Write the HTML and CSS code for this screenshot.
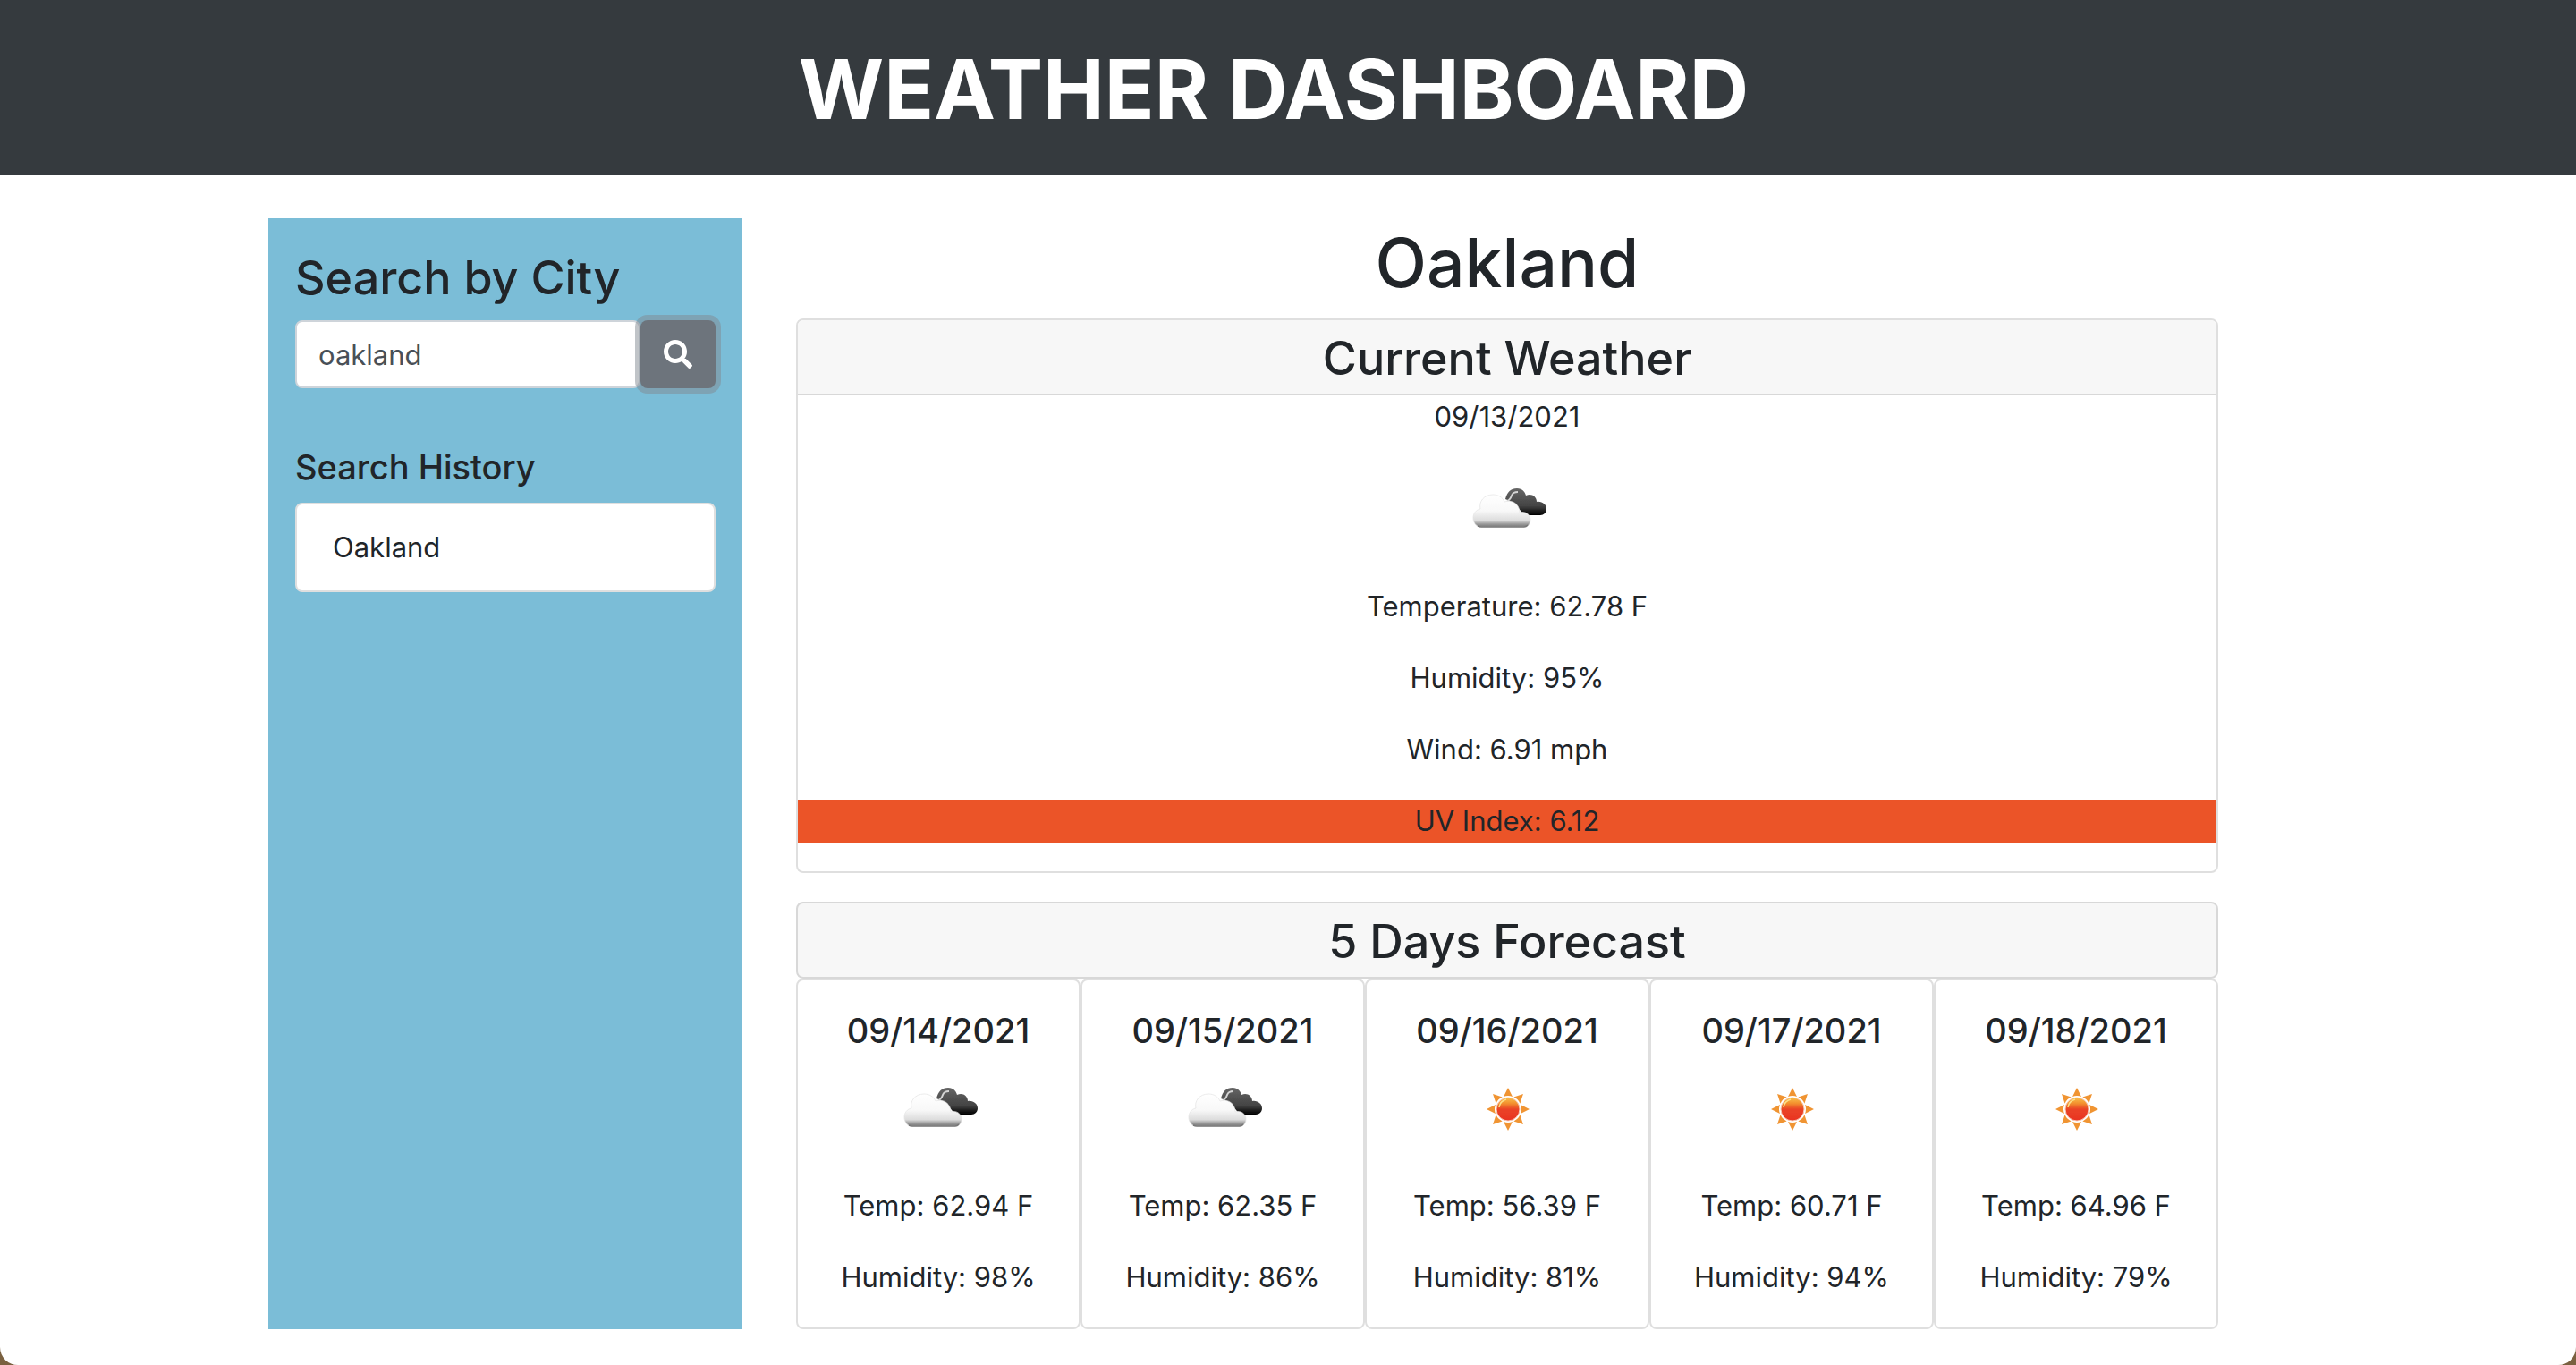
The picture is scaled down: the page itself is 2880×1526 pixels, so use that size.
FILE: index.html
```html
<!DOCTYPE html>
<html lang="en">
<head>
<meta charset="utf-8">
<title>Weather Dashboard</title>
<link rel="stylesheet" href="styles.css">
</head>
<body>
<svg class="sprite" aria-hidden="true">
  <defs>
    <linearGradient id="cloud-light" x1="0" y1="0" x2="0" y2="1">
      <stop offset="0" stop-color="#ffffff"/>
      <stop offset=".5" stop-color="#f8f8f8"/>
      <stop offset=".8" stop-color="#dcdcdc"/>
      <stop offset=".9" stop-color="#a0a0a0"/>
      <stop offset="1" stop-color="#777777"/>
    </linearGradient>
    <linearGradient id="cloud-dark" x1="0" y1="0" x2="0" y2="1">
      <stop offset="0" stop-color="#666666"/>
      <stop offset=".65" stop-color="#444444"/>
      <stop offset="1" stop-color="#000000"/>
    </linearGradient>
    <linearGradient id="sun-disc" x1="0" y1="0" x2="0" y2="1">
      <stop offset="0" stop-color="#f9c04a"/>
      <stop offset=".25" stop-color="#f3902f"/>
      <stop offset=".5" stop-color="#ea4326"/>
      <stop offset="1" stop-color="#e93323"/>
    </linearGradient>
    <filter id="soft" x="-20%" y="-20%" width="140%" height="140%"><feGaussianBlur stdDeviation=".7"/></filter>
    <symbol id="icon-clouds" viewBox="0 0 100 100">
      <g filter="url(#soft)">
        <path d="M48 36C50 28 54 24 61 24c6 0 9 4 10 8 6-3 12 1 12 7 6-1 11 3 11 8 0 4-3 7-7 7H70C64 49 60 40 48 36z" fill="url(#cloud-dark)"/>
        <path d="M50 38c3-1 4-3 5-6 1-3 4-4 7-4" fill="none" stroke="#d5d5d5" stroke-width="2"/>
        <path d="M19 67c-4-1-7-5-7-10 0-5 3-9 8-10-2-8 4-16 14-16 6 0 11 3 13 8 9-3 17 3 17 12 6-2 12 2 12 8 0 4-2 7-5 8z" fill="url(#cloud-light)" stroke="#e2e2e2" stroke-width=".7"/>
        <path d="M17 66q2 1 4 1h48q2 0 4-2" fill="none" stroke="#777777" stroke-width="1.5"/>
      </g>
    </symbol>
    <symbol id="icon-sun" viewBox="0 0 100 100">
      <g filter="url(#soft)">
        <g fill="#f09433">
          <path id="ray" d="M51 24l5 10q-5-2-10 0z"/>
          <use href="#ray" transform="rotate(45 51 48)"/>
          <use href="#ray" transform="rotate(90 51 48)"/>
          <use href="#ray" transform="rotate(135 51 48)"/>
          <use href="#ray" transform="rotate(180 51 48)"/>
          <use href="#ray" transform="rotate(225 51 48)"/>
          <use href="#ray" transform="rotate(270 51 48)"/>
          <use href="#ray" transform="rotate(315 51 48)"/>
        </g>
        <circle cx="51" cy="48" r="13" fill="url(#sun-disc)" stroke="#f7c9b4" stroke-width="1"/>
        <path d="M41 46q1-7 8-9" fill="none" stroke="#fbe08a" stroke-width="1.5"/>
      </g>
    </symbol>
  </defs>
</svg>

<header class="banner"><h1 class="banner-title">WEATHER DASHBOARD</h1></header>

<div class="container">
  <aside class="sidebar">
    <form class="search" onsubmit="return false">
      <label class="search-label" for="city">Search by City</label>
      <div class="search-group">
        <input class="search-input" id="city" type="text" value="oakland">
        <button class="search-button" type="submit" aria-label="Search">
          <svg class="search-icon" viewBox="0 0 512 512" aria-hidden="true"><path fill="currentColor" d="M505 442.700L405.300 343c-4.500-4.500-10.600-7-17-7H372c27.600-35.300 44-79.700 44-128C416 93.100 322.900 0 208 0S0 93.100 0 208s93.100 208 208 208c48.300 0 92.700-16.400 128-44v16.300c0 6.400 2.500 12.500 7 17l99.700 99.700c9.400 9.400 24.600 9.400 33.900 0l28.300-28.300c9.400-9.400 9.400-24.600.1-34zM208 336c-70.700 0-128-57.200-128-128 0-70.700 57.200-128 128-128 70.700 0 128 57.200 128 128 0 70.700-57.200 128-128 128z"/></svg>
        </button>
      </div>
    </form>
    <h2 class="history-title">Search History</h2>
    <ul class="history">
      <li class="history-item">Oakland</li>
    </ul>
  </aside>

  <main class="content">
    <h2 class="city">Oakland</h2>
    <section class="card current">
      <h3 class="card-header">Current Weather</h3>
      <p class="line">09/13/2021</p>
      <svg class="weather-icon" role="img" aria-label="Broken clouds"><use href="#icon-clouds"/></svg>
      <p class="line">Temperature: 62.78 F</p>
      <p class="line">Humidity: 95%</p>
      <p class="line">Wind: 6.91 mph</p>
      <p class="line uv-high">UV Index: 6.12</p>
    </section>

    <section class="forecast">
      <h3 class="card card-header forecast-title">5 Days Forecast</h3>
      <div class="days">
        <article class="card day">
          <h4 class="day-date">09/14/2021</h4>
          <svg class="weather-icon" role="img" aria-label="Broken clouds"><use href="#icon-clouds"/></svg>
          <p class="line">Temp: 62.94 F</p>
          <p class="line">Humidity: 98%</p>
        </article>
        <article class="card day">
          <h4 class="day-date">09/15/2021</h4>
          <svg class="weather-icon" role="img" aria-label="Broken clouds"><use href="#icon-clouds"/></svg>
          <p class="line">Temp: 62.35 F</p>
          <p class="line">Humidity: 86%</p>
        </article>
        <article class="card day">
          <h4 class="day-date">09/16/2021</h4>
          <svg class="weather-icon" role="img" aria-label="Clear sky"><use href="#icon-sun"/></svg>
          <p class="line">Temp: 56.39 F</p>
          <p class="line">Humidity: 81%</p>
        </article>
        <article class="card day">
          <h4 class="day-date">09/17/2021</h4>
          <svg class="weather-icon" role="img" aria-label="Clear sky"><use href="#icon-sun"/></svg>
          <p class="line">Temp: 60.71 F</p>
          <p class="line">Humidity: 94%</p>
        </article>
        <article class="card day">
          <h4 class="day-date">09/18/2021</h4>
          <svg class="weather-icon" role="img" aria-label="Clear sky"><use href="#icon-sun"/></svg>
          <p class="line">Temp: 64.96 F</p>
          <p class="line">Humidity: 79%</p>
        </article>
      </div>
    </section>
  </main>
</div>
</body>
</html>
```
FILE: styles.css
```css
*, *::before, *::after { box-sizing: border-box; }

html { background: #7a6140; }

body {
  margin: 0;
  min-height: 100vh;
  background: #ffffff;
  border-radius: 0 0 20px 20px;
  color: #212529;
  font-family: Inter, "Liberation Sans", sans-serif;
  font-size: 31px;
  line-height: 48px;
}

h1, h2, h3, h4, p, ul { margin: 0; padding: 0; }

h2, h3, h4 { font-weight: 550; }

.sprite { position: absolute; width: 0; height: 0; }

.banner {
  padding: 42px 32px 38px 0;
  background: #353a3e;
  color: #ffffff;
  text-align: center;
}

.banner-title {
  font-size: 92px;
  font-weight: 700;
  line-height: 116px;
}

.container {
  display: grid;
  grid-template-columns: 530px minmax(0, 1fr);
  column-gap: 60px;
  max-width: 2280px;
  margin: 0 auto;
  padding: 48px 100px 40px 0;
}

.sidebar {
  padding: 34px 30px;
  background: #7bbdd7;
}

.search { margin-bottom: 64px; }

.search-label {
  display: block;
  margin-bottom: 14px;
  font-size: 52px;
  font-weight: 550;
  line-height: 66px;
}

.search-group { display: flex; }

.search-input {
  flex: 1;
  min-width: 0;
  height: 76px;
  padding: 0 24px;
  border: 2px solid #ced4da;
  border-radius: 8px;
  background: #ffffff;
  color: #495057;
  font: inherit;
}

.search-button {
  display: flex;
  align-items: center;
  justify-content: center;
  width: 84px;
  height: 76px;
  padding: 0;
  border: 0;
  border-radius: 8px;
  background: #6d747c;
  box-shadow: 0 0 0 6px rgba(130, 138, 145, .5);
  color: #ffffff;
}

.search-icon { width: 32px; height: 32px; }

.history-title {
  margin-bottom: 16px;
  font-size: 38px;
  line-height: 48px;
}

.history { list-style: none; }

.history-item {
  padding: 24px 40px;
  border: 2px solid #dfdfdf;
  border-radius: 8px;
  background: #ffffff;
}

.content { text-align: center; }

.city {
  margin-bottom: 12px;
  font-size: 75px;
  line-height: 100px;
}

.card {
  border: 2px solid #dfdfdf;
  border-radius: 8px;
}

.card-header {
  padding: 10px 8px 6px;
  background: #f7f7f7;
  font-size: 52px;
  line-height: 66px;
}

.current { margin-bottom: 32px; }

.current .card-header {
  border-bottom: 2px solid #d8d8d8;
  border-radius: 6px 6px 0 0;
}

.line { margin-bottom: 32px; }

.weather-icon {
  display: block;
  width: 100px;
  height: 100px;
  margin: 0 auto 32px;
}

.uv-high { background: #eb5428; }

.forecast-title { border-color: #d8d8d8; }

.days {
  display: grid;
  grid-template-columns: repeat(5, minmax(0, 1fr));
}

.day { padding-top: 32px; }

.day-date {
  margin-bottom: 16px;
  font-size: 38px;
  line-height: 48px;
}
```
